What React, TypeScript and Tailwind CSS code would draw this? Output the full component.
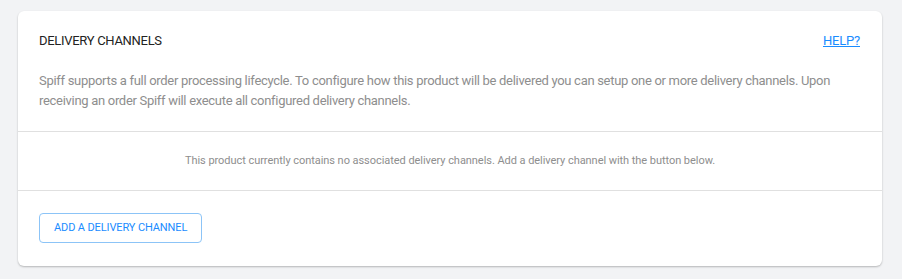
export default function App() {
  return (
    <div className="min-h-[279px] w-[902px] bg-[#f2f3f5] pt-[11px] pl-[18px] pr-[20px]" style={{ fontFamily: "Roboto, 'Liberation Sans', sans-serif" }}>
      <div className="rounded-md bg-white shadow-[0_1px_2px_rgba(0,0,0,0.25)]">
        <div className="pl-[21px] pr-[22px] pt-[20px] pb-[20px]">
          <div className="flex items-center justify-between">
            <div className="text-[13px] leading-[20px] text-[#222] tracking-[-0.3px]">DELIVERY CHANNELS</div>
            <a className="text-[13px] leading-[20px] text-[#1a8cff] underline tracking-[-0.2px]">HELP?</a>
          </div>
          <p className="mt-[20px] text-[13px] leading-[20px] text-[#8e8e8e] tracking-[-0.3px]">
            Spiff supports a full order processing lifecycle. To configure how this product will be delivered you can setup one or more delivery channels. Upon receiving an order Spiff will execute all configured delivery channels.
          </p>
        </div>
        <div className="border-t border-[#e0e0e0] h-[59px] flex items-center justify-center text-[11px] text-[#8e8e8e] tracking-[-0.05px]">
          This product currently contains no associated delivery channels. Add a delivery channel with the button below.
        </div>
        <div className="border-t border-[#e0e0e0] px-[21px] pt-[22px] pb-[23px]">
          <button className="h-[30px] px-[14px] rounded-[4px] border border-[#8cc4f7] text-[11px] text-[#1a8cff] tracking-[-0.12px]">ADD A DELIVERY CHANNEL</button>
        </div>
      </div>
    </div>
  );
}
